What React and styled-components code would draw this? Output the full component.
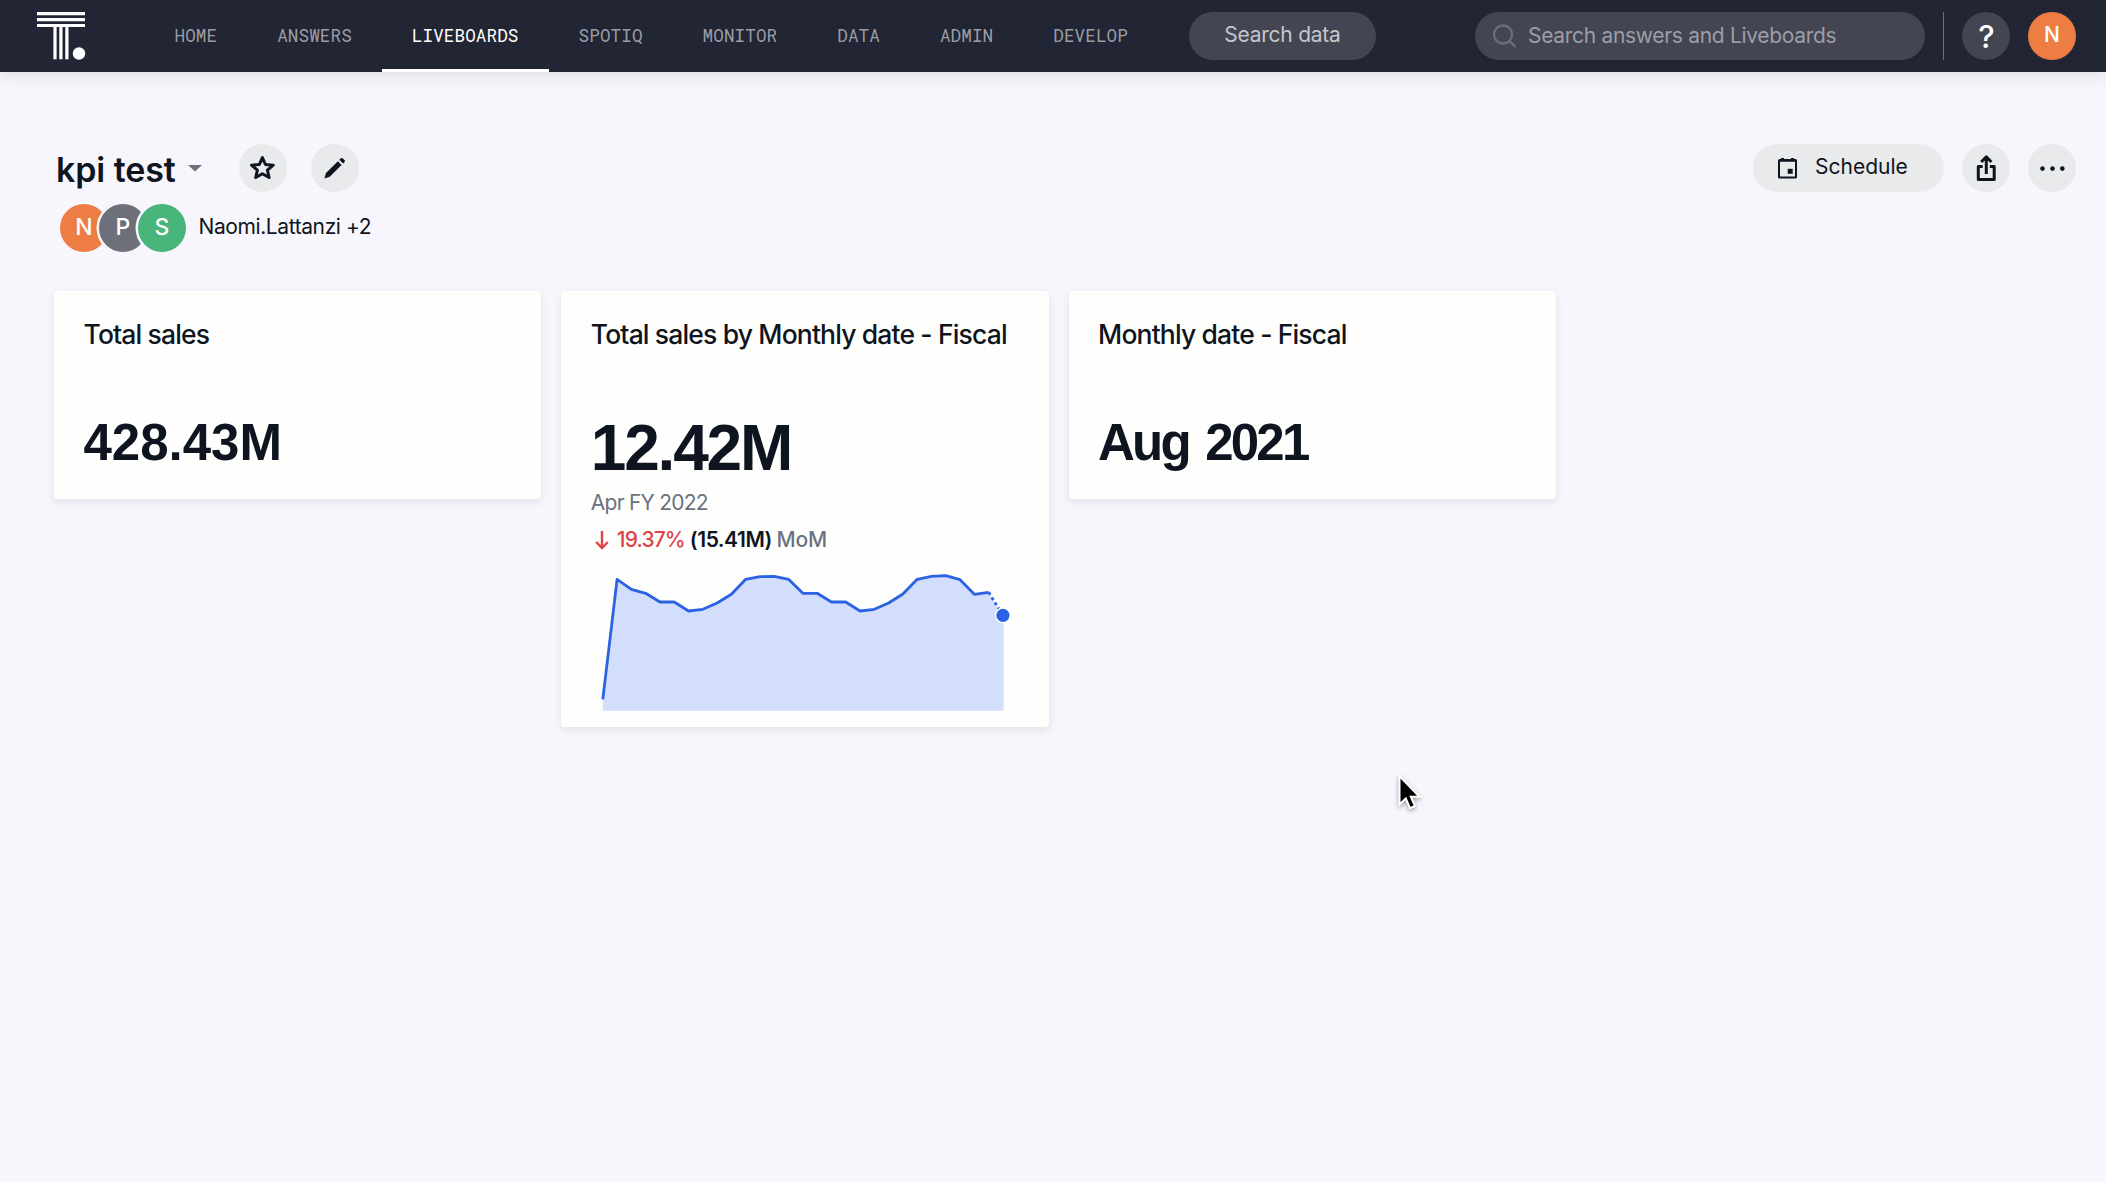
import React from "react";
import styled, { createGlobalStyle } from "styled-components";

const sans = `Inter, "Liberation Sans", sans-serif`;
const display = `"Liberation Sans", Arial, sans-serif`;
const mono = `"Roboto Mono", "DejaVu Sans Mono", monospace`;
const ink = "#0f1520";
const muted = "#6c7180";

const GlobalStyle = createGlobalStyle`
  *, *::before, *::after { box-sizing: border-box; }
  body { margin: 0; background: #f6f6fc; color: ${ink}; font-family: ${sans}; }
  svg { display: block; flex: none; overflow: visible; }
  button { border: 0; margin: 0; font: inherit; color: inherit; }
`;

const Page = styled.div`
  min-height: 1182px;
  overflow: hidden;
`;

const TopBar = styled.header`
  display: flex;
  align-items: center;
  height: 72px;
  padding: 0 30px 0 36.5px;
  background: #222533;
  box-shadow: 0 2px 16px rgba(20, 30, 40, 0.13);
`;

const Tabs = styled.nav`
  display: flex;
  align-self: stretch;
  margin-left: 59.5px;
`;

const Tab = styled.a`
  display: flex;
  align-items: center;
  padding: 1px 30px 0;
  border-bottom: 3px solid ${(p) => (p.$active ? "#fff" : "transparent")};
  color: ${(p) => (p.$active ? "#fff" : "#9a9da6")};
  font-family: ${mono};
  font-size: 17.6px;
  letter-spacing: 0.11px;
`;

const SearchData = styled.button`
  width: 187px;
  height: 48px;
  margin-left: 31px;
  padding: 0 0 3px;
  border-radius: 24px;
  background: #434552;
  color: #c3c6cc;
  font-size: 21px;
  letter-spacing: -0.25px;
`;

const TopRight = styled.div`
  display: flex;
  align-items: center;
  gap: 18px;
  margin-left: auto;
`;

const SearchField = styled.div`
  display: flex;
  align-items: center;
  gap: 11px;
  width: 450px;
  height: 48px;
  padding: 0 18px 1px;
  border-radius: 24px;
  background: #434552;
  box-shadow: 0 3px 2px -1px #22262c;
  color: #9c9fa8;
  font-size: 21px;
  letter-spacing: -0.31px;
`;

const Divider = styled.div`
  width: 1px;
  height: 48px;
  background: #6f727d;
`;

const Round = styled.button`
  display: flex;
  align-items: center;
  justify-content: center;
  width: 48px;
  height: 48px;
  padding: 0;
  border-radius: 50%;
  background: ${(p) => (p.$dark ? "#434552" : "#e9eaec")};
`;

const HelpMark = styled.span`
  padding: 1px 0 0 1px;
  color: #fff;
  font-size: 31px;
  font-weight: 500;
  line-height: 32px;
`;

const Avatar = styled.div`
  display: flex;
  align-items: center;
  justify-content: center;
  width: 48px;
  height: 48px;
  padding-bottom: 3px;
  border-radius: 50%;
  background: ${(p) => p.$color};
  color: #fff;
  font-size: ${(p) => p.$size || 23}px;
  font-weight: 500;
`;

const Heading = styled.section`
  display: flex;
  align-items: center;
  height: 48px;
  margin: 72px 30px 0 54px;
`;

const Title = styled.h1`
  margin: 0;
  padding: 4px 0 0 2px;
  font-size: 34px;
  font-weight: 600;
  line-height: 40px;
  letter-spacing: -0.1px;
`;

const Caret = styled.svg`
  margin: 0 37px 0 12px;
`;

const HeadingButtons = styled.div`
  display: flex;
  gap: 24px;
`;

const Actions = styled.div`
  display: flex;
  gap: 18px;
  margin-left: auto;
`;

const Schedule = styled.button`
  display: flex;
  align-items: center;
  gap: 17px;
  width: 191px;
  height: 48px;
  padding: 0 0 0 25px;
  border-radius: 24px;
  background: #e9eaec;
  font-size: 21px;
`;

const ScheduleLabel = styled.span`
  padding-bottom: 3px;
`;

const People = styled.section`
  display: flex;
  align-items: center;
  height: 48px;
  margin: 12px 0 0 60px;
`;

const Stack = styled.div`
  display: flex;
  & > * + * {
    margin-left: -9px;
    box-shadow: 0 0 0 2.5px #f6f6fc;
  }
`;

const Names = styled.span`
  margin-left: 12.5px;
  padding-bottom: 3px;
  font-size: 21px;
  letter-spacing: -0.4px;
`;

const Board = styled.main`
  display: grid;
  grid-template-columns: repeat(3, 487.3px);
  align-items: start;
  gap: 20px;
  margin: 39px 0 0 54px;
`;

const Card = styled.article`
  display: flex;
  flex-direction: column;
  height: ${(p) => p.$height}px;
  padding: 27px 30px 0 29.5px;
  border-radius: 4px;
  background: #fefffd;
  box-shadow: 0 3px 8px rgba(20, 40, 40, 0.09);
`;

const CardTitle = styled.h2`
  margin: 0;
  font-size: 26.5px;
  font-weight: 500;
  line-height: 32px;
  letter-spacing: -0.85px;
  white-space: nowrap;
`;

const Figure = styled.div`
  margin-top: ${(p) => (p.$large ? 66 : 64.5)}px;
  font-family: ${display};
  font-weight: 700;
  font-size: ${(p) => (p.$large ? 64 : 51)}px;
  line-height: ${(p) => (p.$large ? 64 : 56)}px;
  letter-spacing: ${(p) => p.$tracking || 0}px;
  word-spacing: 5px;
  white-space: nowrap;
`;

const Period = styled.div`
  margin-top: 9px;
  color: ${muted};
  font-size: 21px;
  line-height: 28px;
  letter-spacing: -0.75px;
`;

const Change = styled.div`
  display: flex;
  align-items: center;
  height: 28px;
  margin-top: 9px;
  padding-left: 4px;
  font-size: 21px;
  line-height: 28px;
`;

const Percent = styled.span`
  margin-left: 8px;
  color: #df4348;
  font-weight: 500;
  letter-spacing: -0.87px;
`;

const Previous = styled.span`
  margin-left: 5px;
  font-weight: 600;
  letter-spacing: -0.45px;
`;

const Basis = styled.span`
  margin-left: 4.5px;
  color: ${muted};
  font-weight: 500;
  letter-spacing: -0.2px;
`;

const Chart = styled.svg`
  margin-top: 9px;
`;

const Cursor = styled.svg`
  position: absolute;
  left: 1395.5px;
  top: 772px;
  filter: drop-shadow(0 2px 2px rgba(0, 0, 0, 0.35));
`;

const levels = [
  136.3, 16.3, 26.3, 30.3, 39, 39, 48, 46.3, 40, 31.3, 16.3, 13.7, 13.3, 16.3, 30.3,
  30.3, 39, 39, 48, 46.3, 40, 31, 16.3, 13.3, 12.7, 16.7, 31.3, 29.3, 52.3,
];
const points = levels.map((y, i) => [11.8 + i * 14.29, y]);
const join = (list) => list.map((p) => p.join(",")).join(" ");
const last = points[points.length - 1];

function Sparkline() {
  return (
    <Chart width="427" height="150">
      <polygon
        fill="#d3ddfc"
        points={`${join(points)} ${last[0] + 0.7},${last[1]} ${last[0] + 0.7},147.7 11.8,147.7`}
      />
      <polyline
        points={join(points.slice(0, -1))}
        fill="none"
        stroke="#2b62e4"
        strokeWidth="2.8"
        strokeLinejoin="round"
      />
      <polyline
        points={join(points.slice(-2))}
        fill="none"
        stroke="#2b62e4"
        strokeWidth="2.8"
        strokeDasharray="3 3"
      />
      <circle cx={last[0]} cy={last[1]} r="8" fill="#fff" />
      <circle cx={last[0]} cy={last[1]} r="6.6" fill="#2b62e4" />
    </Chart>
  );
}

function Logo() {
  return (
    <svg width="48.5" height="48" fill="#fff">
      <path d="M0 0h48v3.2H0zM0 6h48v3.2H0zM0 12h48v3H0zM16.4 14h3.2v33.3h-3.2zM22.3 14h3.2v33.3h-3.2zM28.3 14h3.2v33.3h-3.2z" />
      <circle cx="42" cy="41.5" r="6.2" />
    </svg>
  );
}

const tabs = ["HOME", "ANSWERS", "LIVEBOARDS", "SPOTIQ", "MONITOR", "DATA", "ADMIN", "DEVELOP"];

export default function App() {
  return (
    <Page>
      <GlobalStyle />
      <TopBar>
        <Logo />
        <Tabs>
          {tabs.map((t) => (
            <Tab key={t} $active={t === "LIVEBOARDS"}>
              {t}
            </Tab>
          ))}
        </Tabs>
        <SearchData>Search data</SearchData>
        <TopRight>
          <SearchField>
            <svg width="24" height="24" fill="none" stroke="#6c6f7b" strokeWidth="2.3">
              <circle cx="10" cy="10.5" r="9" />
              <path d="M16.3 16.8l6.4 6.2" />
            </svg>
            Search answers and Liveboards
          </SearchField>
          <Divider />
          <Round $dark>
            <HelpMark>?</HelpMark>
          </Round>
          <Avatar $color="#ed7d43" $size={21}>
            N
          </Avatar>
        </TopRight>
      </TopBar>

      <Heading>
        <Title>kpi test</Title>
        <Caret width="14" height="7" fill="#6d717d">
          <path d="M0 0h14L7 6.5z" />
        </Caret>
        <HeadingButtons>
          <Round>
            <svg width="28" height="28" fill="none" stroke={ink} strokeWidth="3">
              <path
                strokeLinejoin="round"
                d="M13.4 3.6l3 6.800 7.900.800-5.900 5 1.700 7.300-6.700-3.800-6.700 3.800 1.700-7.300-5.900-5 7.900-.800z"
              />
            </svg>
          </Round>
          <Round>
            <svg width="24" height="24" fill={ink}>
              <path d="M1.400 22.600l1.600-5.500L14.900 5.200l3.700 3.700L6.700 20.800zM16.300 3.800l1.300-1.300c.7-.7 1.500-.7 2.200-.1l1.600 1.600c.7.7.7 1.500 0 2.200l-1.300 1.300z" />
            </svg>
          </Round>
        </HeadingButtons>
        <Actions>
          <Schedule>
            <svg width="20" height="21" fill={ink}>
              <path
                fillRule="evenodd"
                d="M0 2.500a1.500 1.500 0 0 1 1.500-1.500H3V0h3v1h7V0h3v1h1.500A1.500 1.500 0 0 1 19 2.500v16.500a1.500 1.500 0 0 1-1.500 1.500h-16A1.500 1.500 0 0 1 0 19zM2 3.800v14.700h15V3.800z"
              />
              <path d="M9.700 10.800h5v5h-5z" />
            </svg>
            <ScheduleLabel>Schedule</ScheduleLabel>
          </Schedule>
          <Round>
            <svg width="20" height="28" fill="none" stroke={ink} strokeWidth="3">
              <path
                d="M6.700 12.500H2.300v13h15.900v-13h-4.400M10.300 20V3.500M5.200 8L10.300 2.900 15.400 8"
                strokeLinejoin="round"
              />
            </svg>
          </Round>
          <Round>
            <svg width="26" height="6" fill={ink}>
              <circle cx="3.500" cy="3.600" r="2.300" />
              <circle cx="13.500" cy="3.600" r="2.300" />
              <circle cx="23.300" cy="3.600" r="2.300" />
            </svg>
          </Round>
        </Actions>
      </Heading>

      <People>
        <Stack>
          <Avatar $color="#ed7d43">N</Avatar>
          <Avatar $color="#6d7079">P</Avatar>
          <Avatar $color="#48b57b">S</Avatar>
        </Stack>
        <Names>Naomi.Lattanzi +2</Names>
      </People>

      <Board>
        <Card $height={208}>
          <CardTitle>Total sales</CardTitle>
          <Figure>428.43M</Figure>
        </Card>
        <Card $height={436}>
          <CardTitle>Total sales by Monthly date - Fiscal</CardTitle>
          <Figure $large $tracking={-2.2}>
            12.42M
          </Figure>
          <Period>Apr FY 2022</Period>
          <Change>
            <svg width="14" height="20" fill="none" stroke="#df4348" strokeWidth="2.4">
              <path d="M7 1v17M1.200 12L7 18l5.800-6" />
            </svg>
            <Percent>19.37%</Percent>
            <Previous>(15.41M)</Previous>
            <Basis>MoM</Basis>
          </Change>
          <Sparkline />
        </Card>
        <Card $height={208}>
          <CardTitle>Monthly date - Fiscal</CardTitle>
          <Figure $tracking={-2.8}>Aug 2021</Figure>
        </Card>
      </Board>

      <Cursor width="26" height="40" viewBox="0 0 26 40">
        <path
          d="M3.500 4v28.500l6.300-6 4.200 9.700 5-2.200-4.200-9.300h8.700z"
          fill="#000"
          stroke="#fff"
          strokeWidth="2"
        />
      </Cursor>
    </Page>
  );
}
